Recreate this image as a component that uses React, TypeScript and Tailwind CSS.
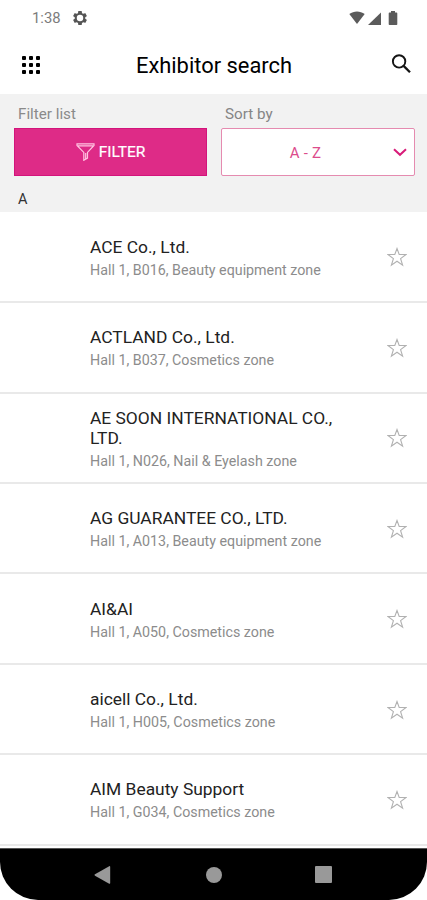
import React from "react";

const exhibitors = [
  { name: "ACE Co., Ltd.", place: "Hall 1, B016, Beauty equipment zone" },
  { name: "ACTLAND Co., Ltd.", place: "Hall 1, B037, Cosmetics zone" },
  { name: "AE SOON INTERNATIONAL CO., LTD.", place: "Hall 1, N026, Nail & Eyelash zone" },
  { name: "AG GUARANTEE CO., LTD.", place: "Hall 1, A013, Beauty equipment zone" },
  { name: "AI&AI", place: "Hall 1, A050, Cosmetics zone" },
  { name: "aicell Co., Ltd.", place: "Hall 1, H005, Cosmetics zone" },
  { name: "AIM Beauty Support", place: "Hall 1, G034, Cosmetics zone" },
];

function StatusBar() {
  return (
    <div className="flex h-9 items-center pl-8 pr-[29px] text-[#7c7c7c]">
      <span className="w-[29px] text-[14.8px] leading-9">1:38</span>
      <svg className="ml-3 size-[14px]" viewBox="2 2 20 20" fill="#555">
        <path
          fillRule="evenodd"
          d="M19.43 12.98c.04-.32.07-.64.07-.98s-.03-.66-.07-.98l2.11-1.65c.19-.15.24-.42.12-.64l-2-3.46c-.12-.22-.39-.3-.61-.22l-2.49 1c-.52-.4-1.08-.73-1.69-.98l-.38-2.65A.488.488 0 0 0 14 2h-4c-.25 0-.46.18-.49.42l-.38 2.65c-.61.25-1.17.59-1.69.98l-2.49-1c-.23-.09-.49 0-.61.22l-2 3.46c-.13.22-.07.49.12.64l2.11 1.65c-.04.32-.07.65-.07.98s.03.66.07.98l-2.11 1.65c-.19.15-.24.42-.12.64l2 3.46c.12.22.39.3.61.22l2.49-1c.52.4 1.08.73 1.69.98l.38 2.65c.03.24.24.42.49.42h4c.25 0 .46-.18.49-.42l.38-2.65c.61-.25 1.17-.59 1.69-.98l2.49 1c.23.09.49 0 .61-.22l2-3.46c.12-.22.07-.49-.12-.64l-2.11-1.65zM12 16.6a4.6 4.6 0 1 1 0-9.2 4.6 4.6 0 0 1 0 9.2z"
        />
      </svg>
      <div className="ml-auto flex items-center gap-[3px]">
        <svg className="mt-[-1px] h-[13px] w-4" viewBox="0 0 16 13" fill="#5b5b5b">
          <path d="M8 13 0.3 3.1C4.8-.4 11.2-.4 15.7 3.1Z" />
        </svg>
        <svg className="h-[13px] w-[13px]" viewBox="0 0 13 13" fill="#5b5b5b">
          <path d="M0 13 13 0.5V13Z" />
        </svg>
        <svg className="ml-1 mt-[-1px] h-[14px] w-[10px]" viewBox="0 0 10 14" fill="#5b5b5b">
          <path d="M3 0h4v1.6h1.5q.8 0 .8.8v10.8q0 .8-.8.8h-7q-.8 0-.8-.8V2.4q0-.8.8-.8H3Z" />
        </svg>
      </div>
    </div>
  );
}

function Header() {
  return (
    <header className="grid h-[58px] grid-cols-[60px_1fr_60px] items-center">
      <button className="ml-[22px] mt-[-2px] grid size-[18px] grid-cols-3 gap-[3px]" aria-label="Menu">
        {Array.from({ length: 9 }, (_, i) => (
          <span key={i} className="size-1 rounded-[1px] bg-black" />
        ))}
      </button>
      <h1 className="ml-px whitespace-nowrap pt-px text-center text-[21.9px] leading-[58px] text-black">
        Exhibitor search
      </h1>
      <svg className="ml-6 mt-[-3px] size-5" viewBox="0 0 20 20" fill="none" stroke="#151515">
        <circle cx="8.1" cy="7.4" r="6.2" strokeWidth="1.9" />
        <path d="m12.6 11.9 6.4 6.4" strokeWidth="2.3" />
      </svg>
    </header>
  );
}

function Filters() {
  return (
    <section className="h-[118px] bg-[#f2f2f2] px-3.5 pt-2.5">
      <div className="grid grid-cols-[193px_194px] gap-x-3.5">
        <span className="h-6 pl-1 text-[15.2px] leading-[21px] text-[#8a8a8a]">Filter list</span>
        <span className="h-6 pl-1 text-[15.2px] leading-[21px] text-[#858585]">Sort by</span>
        <button className="flex h-12 items-center justify-center gap-1 border border-[#d3147c] bg-[#de2b87] text-[15.5px] text-white">
          <svg className="h-[18px] w-[19px]" viewBox="0 0 19 18" fill="none" stroke="#ffc4e1" strokeWidth="1.2">
            <path d="M1 .9h17v1.5l-6.5 7v5.7L7.8 17.3V9.4L1 2.4Z M2 2.9h15 M9.7 10v6" />
          </svg>
          <span className="pt-0.5 [-webkit-text-stroke:0.2px_#fff]">FILTER</span>
        </button>
        <div className="grid h-12 grid-cols-[167px_1fr] items-center rounded-[2px] border-[1.5px] border-[#e58bb0] bg-white text-center text-[15px] text-[#dc4c8c]">
          <span className="pt-0.5 tracking-[.2px]">A - Z</span>
          <svg className="ml-[4px] h-[9px] w-[14px]" viewBox="0 0 14 9" fill="none" stroke="#d81b79" strokeWidth="2">
            <path d="m1 1.2 6 5.6 6-5.6" />
          </svg>
        </div>
      </div>
      <h2 className="mt-[14px] pl-1 text-[14.5px] leading-5 text-[#333]">A</h2>
    </section>
  );
}

function ExhibitorRow({ name, place }: { name: string; place: string }) {
  return (
    <li className="grid h-[90.43px] grid-cols-[252px_1fr] items-center border-b-2 border-[#e9e9e9] pl-[90px]">
      <div className="pt-0.5">
        <p className="text-[17.4px] leading-5 text-[#222]">{name}</p>
        <p className="mt-1 whitespace-nowrap text-[14.27px] leading-[18px] text-[#8c8c8c]">{place}</p>
      </div>
      <svg className="ml-[45px] mt-px size-5" viewBox="0 0 20 20" fill="none" stroke="#b1b1b1" strokeWidth="1.1">
        <path d="m10 1.5 2.2 6H19l-5.4 4.1 2 6.6-5.6-4-5.6 4 2-6.6L1 7.5h6.8Z" />
      </svg>
    </li>
  );
}

function NavigationBar() {
  return (
    <nav className="grid h-[52px] shrink-0 grid-cols-[1fr_16px_1fr] items-center rounded-b-[38px] border-t border-[#555] bg-black text-[#999]">
      <svg className="ml-[94px] h-[18px] w-[17px]" viewBox="0 0 17 18" fill="currentColor">
        <path d="M1 8.3 15.2.2q1-.4 1 .7v16.2q0 1-1 .6L1 9.7q-1-.7 0-1.4Z" />
      </svg>
      <span className="size-4 rounded-full bg-[#999]" />
      <span className="ml-[93px] size-[17px] rounded-[1px] bg-[#999]" />
    </nav>
  );
}

export default function App() {
  return (
    <main className="flex h-[900px] w-[427px] flex-col overflow-hidden bg-white font-['Roboto','Liberation_Sans',sans-serif]">
      <StatusBar />
      <Header />
      <Filters />
      <ul className="h-[636px] shrink-0 pt-[0.7px]">
        {exhibitors.map((item) => (
          <ExhibitorRow key={item.name} {...item} />
        ))}
      </ul>
      <NavigationBar />
    </main>
  );
}
